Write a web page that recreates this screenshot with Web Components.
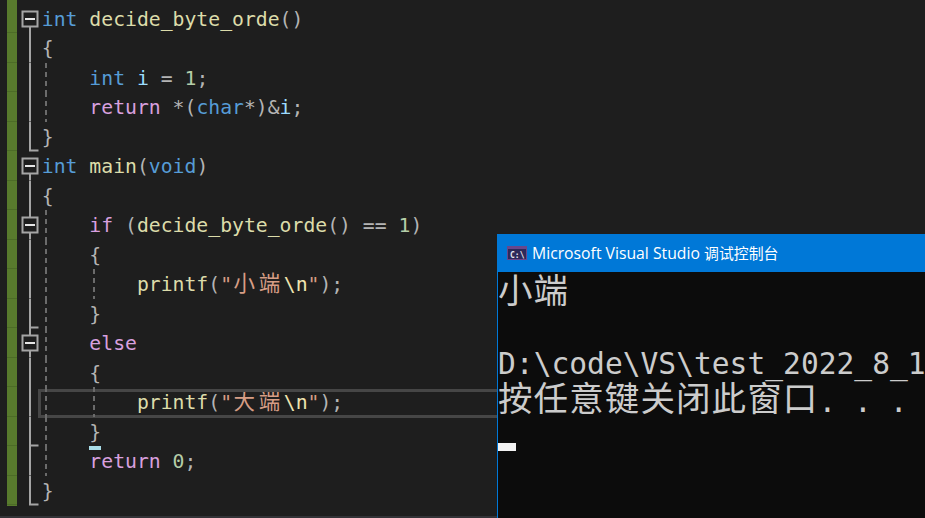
<!DOCTYPE html>
<html lang="zh"><head><meta charset="utf-8"><title>VS</title>
<style>html,body{margin:0;padding:0;background:#1e1e1e;overflow:hidden}</style></head>
<body>
<ide-screen>
<code-editor>
<code-line fold="start"><span class="k">int</span> <span class="f">decide_byte_orde</span><span class="p">()</span></code-line>
<code-line fold="line"><span class="p">{</span></code-line>
<code-line fold="line" guides="1">    <span class="k">int</span> <span class="v">i</span> <span class="p">=</span> <span class="n">1</span><span class="p">;</span></code-line>
<code-line fold="line" guides="1">    <span class="m">return</span> <span class="p">*(</span><span class="k">char</span><span class="p">*)&amp;</span><span class="v">i</span><span class="p">;</span></code-line>
<code-line fold="end"><span class="p">}</span></code-line>
<code-line fold="start"><span class="k">int</span> <span class="f">main</span><span class="p">(</span><span class="k">void</span><span class="p">)</span></code-line>
<code-line fold="line"><span class="p">{</span></code-line>
<code-line fold="box" guides="1">    <span class="m">if</span> <span class="p">(</span><span class="f">decide_byte_orde</span><span class="p">() ==</span> <span class="n">1</span><span class="p">)</span></code-line>
<code-line fold="line" guides="1">    <span class="p">{</span></code-line>
<code-line fold="line" guides="2">        <span class="f">printf</span><span class="p">(</span><span class="s">"</span><span class="z">小端</span><span class="e">\n</span><span class="s">"</span><span class="p">);</span></code-line>
<code-line fold="tee" guides="1">    <span class="p">}</span></code-line>
<code-line fold="box" guides="1">    <span class="m">else</span></code-line>
<code-line fold="line" guides="1">    <span class="p">{</span></code-line>
<code-line fold="line" guides="2" current>        <span class="f">printf</span><span class="p">(</span><span class="s">"</span><span class="z">大端</span><span class="e">\n</span><span class="s">"</span><span class="p">);</span></code-line>
<code-line fold="tee" guides="1" >    <span class="b">}</span></code-line>
<code-line fold="line" guides="1">    <span class="m">return</span> <span class="n">0</span><span class="p">;</span></code-line>
<code-line fold="end"><span class="p">}</span></code-line>
</code-editor>
<console-window title-text="Microsoft Visual Studio" title-cjk="调试控制台">
<console-line><span class="z">小端</span></console-line>
<console-line></console-line>
<console-line>D:\code\VS\test_2022_8_1</console-line>
<console-line><span class="z">按任意键关闭此窗口</span>. . .</console-line>
<console-line cursor></console-line>
</console-window>
</ide-screen>
<script>
const def=(n,css,html)=>customElements.define(n,class extends HTMLElement{
  constructor(){super();const r=this.attachShadow({mode:'open'});r.innerHTML='<style>'+css+'</style>'+html(this);}
});
def('ide-screen',`:host{display:flex;flex-direction:column;position:relative;width:925px;height:518px;overflow:hidden;background:#1e1e1e}`,()=>`<slot></slot>`);
def('code-editor',`:host{display:block;flex:none;height:518px;box-sizing:border-box;padding-top:3.5px;
  background:linear-gradient(#333337,#333337) 0 516px/100% 2px no-repeat,linear-gradient(#587a2d,#587a2d) 7px 0/10px 506px no-repeat;
  font:19.75px/29.5px "DejaVu Sans Mono","Noto Sans CJK SC",monospace;color:#dcdcdc}`,()=>`<slot></slot>`);
const BOX=`<rect x="1.5" y="7.5" width="15" height="15" class="l"/><path d="M4 15H14" class="w"/>`;
const FOLD={
 start:`<path d="M9 23V29.5" class="l"/>`+BOX,
 box:`<path d="M9 0V7M9 23V29.5" class="l"/>`+BOX,
 line:`<path d="M9 0V29.5" class="l"/>`,
 end:`<path d="M9 0V28.5H17.5" class="l"/>`,
 tee:`<path d="M9 0V29.5M9 28.5H17.5" class="l"/>`
};
class CodeLine extends HTMLElement{
 constructor(){super();const r=this.attachShadow({mode:'open'});
  const f=this.getAttribute('fold')||'line';const g=+this.getAttribute('guides')||0;
  r.innerHTML=`<style>
  :host{display:flex;height:29.5px;position:relative;white-space:pre}
  .green{flex:none;width:10px;margin-left:7px;box-sizing:border-box;border-bottom:1px solid #4c6b27}
  svg{flex:none;width:18px;height:29.5px;margin-left:4px;display:block;overflow:visible}
  .l{fill:none;stroke:#a5a5a5;stroke-width:2}
  .w{stroke:#e6e6e6;stroke-width:2}
  .code{flex:1;padding:1px 0 0 2.8px}
  .g{position:absolute;width:2px;top:0;bottom:0;background:repeating-linear-gradient(#6b6b6b 0 5px,transparent 5px 9px)}
  .cur{position:absolute;left:38px;right:-2px;top:1.5px;height:29px;box-sizing:border-box;border:3px solid #464646}
  ::slotted(.k){color:#569cd6}::slotted(.f){color:#dcdcaa}::slotted(.p){color:#b4b4b4}
  ::slotted(.m){color:#d8a0df}::slotted(.v){color:#9cdcfe}::slotted(.n){color:#b5cea8}
  ::slotted(.s){color:#d69d85}::slotted(.z){color:#d69d85;font-size:21.5px;letter-spacing:3.6px;padding-left:1.5px;font-family:"Noto Sans CJK SC",sans-serif;line-height:1}
  ::slotted(.e){color:#efe4b0}
  ::slotted(.b){color:#b4b4b4;display:inline-block;background:linear-gradient(#a8dce8,#a8dce8) 0 100%/100% 4px no-repeat;height:32px}
  </style>
  ${this.hasAttribute('current')?'<div class="cur"></div>':''}
  <div class="green"></div>
  <svg viewBox="0 0 18 29.5">${FOLD[f]}</svg>
  <div class="code"><slot></slot></div>
  ${g>=1?'<div class="g" style="left:45px"></div>':''}
  ${g>=2?'<div class="g" style="left:93px"></div>':''}`;
 }
}
customElements.define('code-line',CodeLine);
def('console-window',`:host{display:flex;flex-direction:column;position:absolute;left:497px;top:234px;right:0;bottom:0;background:#0c0c0c;border-left:1px solid #0078d7;overflow:hidden}
 .t{flex:none;height:38px;background:#0078d7;display:flex;align-items:center;padding-left:9px;gap:5px;color:#fff;font:15.75px "Open Sans","Noto Sans CJK SC",sans-serif;white-space:pre}
 .t b{font:14.9px "Noto Sans CJK SC",sans-serif}
 svg{width:20px;height:14px;flex:none}
 .b{flex:1;min-width:0}`,
 (e)=>`<div class="t"><svg viewBox="0 0 20 14"><rect width="20" height="14" fill="#68478c"/><rect x="1" y="3" width="18" height="10" fill="#2d2a5a"/><text x="3" y="11.5" font-size="8" font-family="DejaVu Sans Mono" font-weight="bold" fill="#e8e8f0">C:\\</text></svg><span>${e.getAttribute('title-text')} <b>${e.getAttribute('title-cjk')}</b></span></div><div class="b"><slot></slot></div>`);
def('console-line',`:host{display:block;height:36px;font:29.6px/40px "DejaVu Sans Mono","Noto Sans CJK SC",monospace;color:#cccccc;white-space:pre;position:relative}
 ::slotted(.z){font-family:"Noto Sans CJK SC",sans-serif;font-size:34.5px;letter-spacing:1.1px;line-height:1;position:relative;top:-1.5px}
 i{position:absolute;left:0;bottom:1px;width:18px;height:8px;background:#f2f2f2}`,
 (e)=>`<slot></slot>${e.hasAttribute('cursor')?'<i></i>':''}`);
</script>
</body></html>
